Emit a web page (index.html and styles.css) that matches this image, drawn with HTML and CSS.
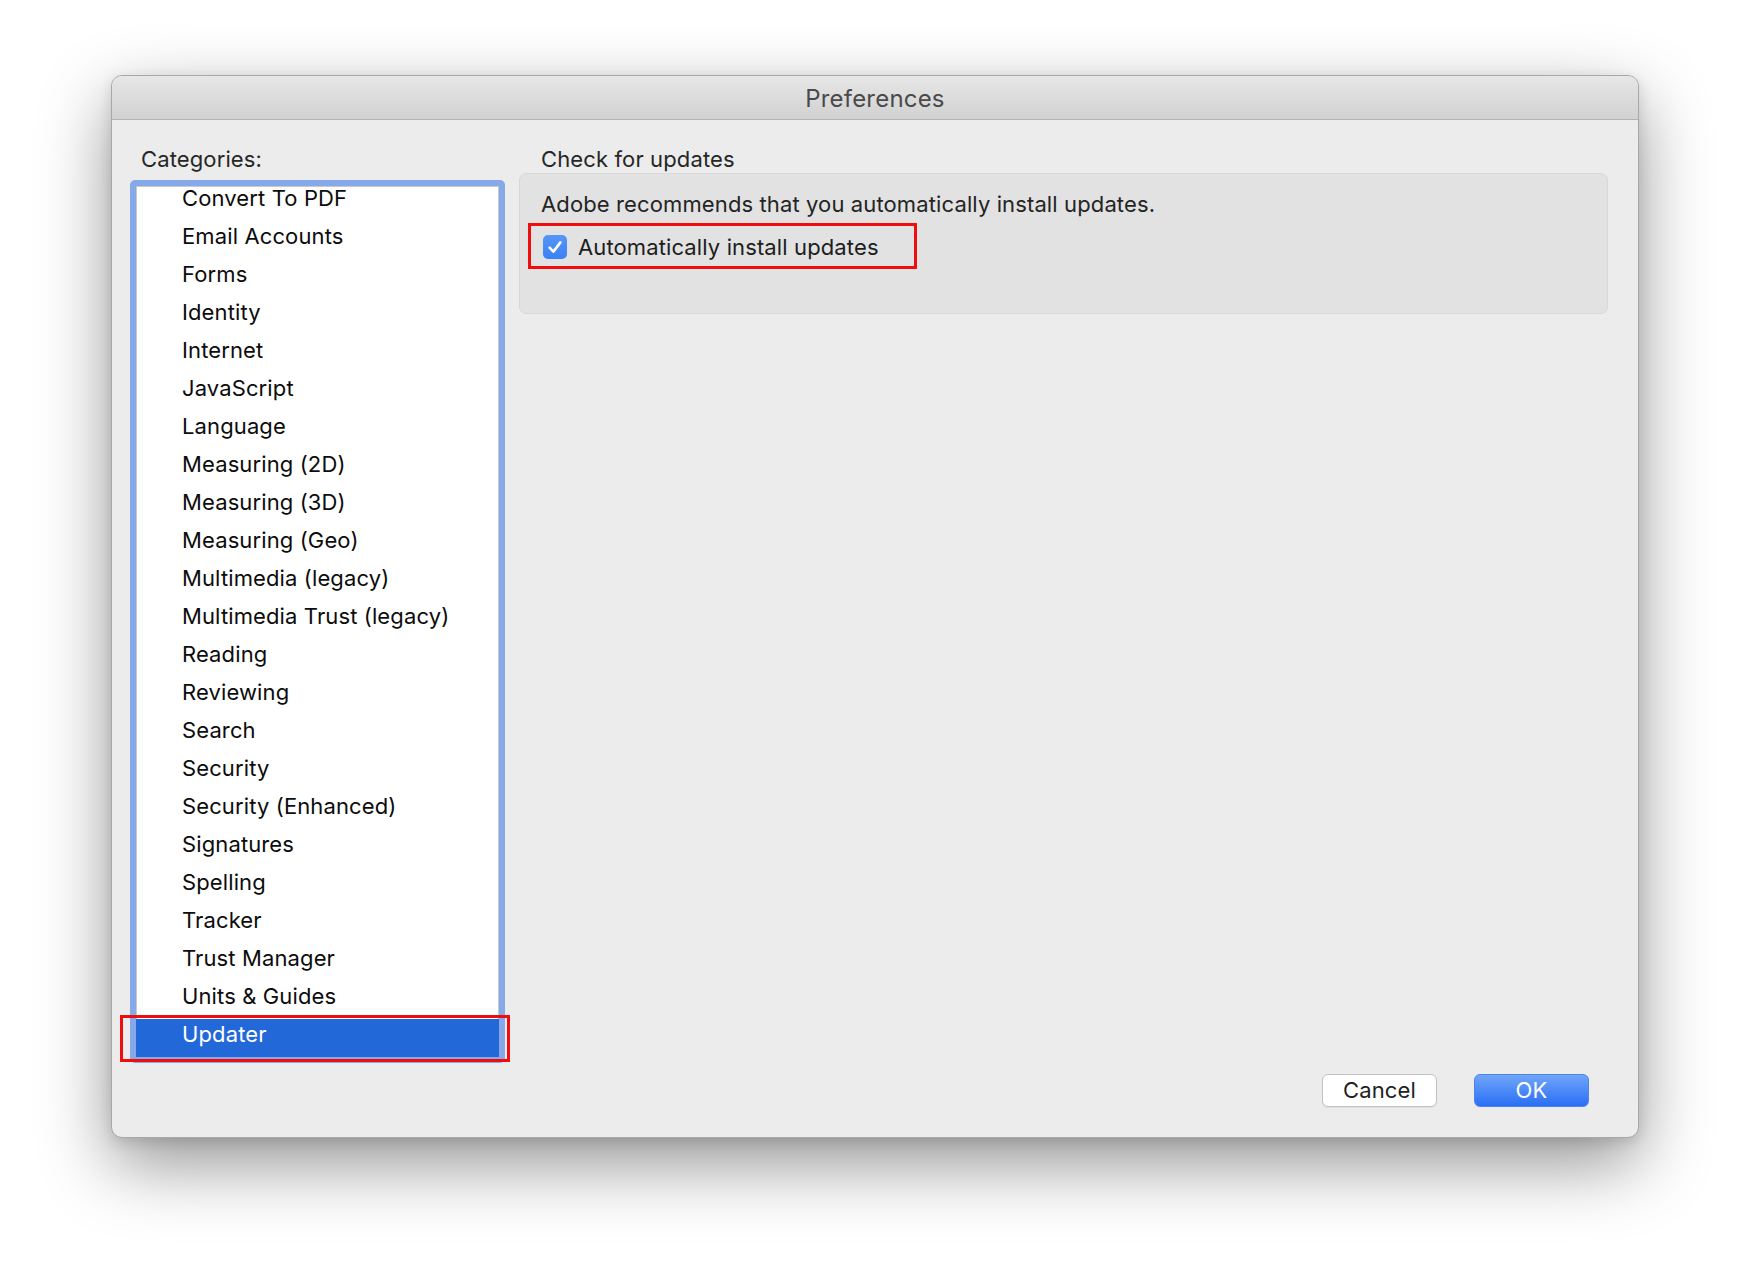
FILE: index.html
```html
<!DOCTYPE html>
<html>
<head>
<meta charset="utf-8">
<title>Preferences</title>
<link rel="stylesheet" href="styles.css">
</head>
<body>
<div class="stage">
  <div class="window">
    <div class="titlebar">Preferences</div>
    <div class="content">
      <div class="main">
        <div class="left">
          <div class="label">Categories:</div>
          <div class="list-wrap">
            <div class="list">
              <ul class="rows">
                <li>Convert To PDF</li>
                <li>Email Accounts</li>
                <li>Forms</li>
                <li>Identity</li>
                <li>Internet</li>
                <li>JavaScript</li>
                <li>Language</li>
                <li>Measuring (2D)</li>
                <li>Measuring (3D)</li>
                <li>Measuring (Geo)</li>
                <li>Multimedia (legacy)</li>
                <li>Multimedia Trust (legacy)</li>
                <li>Reading</li>
                <li>Reviewing</li>
                <li>Search</li>
                <li>Security</li>
                <li>Security (Enhanced)</li>
                <li>Signatures</li>
                <li>Spelling</li>
                <li>Tracker</li>
                <li>Trust Manager</li>
                <li>Units &amp; Guides</li>
                <li class="selected">Updater</li>
              </ul>
            </div>
            <div class="callout callout-list"></div>
          </div>
        </div>
        <div class="right">
          <div class="label">Check for updates</div>
          <div class="group">
            <div class="group-text">Adobe recommends that you automatically install updates.</div>
            <div class="check-row">
              <span class="checkbox">
                <svg width="24" height="24" viewBox="0 0 24 24"><path d="M6.6 12.6 L10.4 16.6 L17.4 7.4" fill="none" stroke="#fff" stroke-width="2.6" stroke-linecap="round" stroke-linejoin="round"/></svg>
              </span>
              <span class="check-label">Automatically install updates</span>
              <div class="callout callout-check"></div>
            </div>
          </div>
        </div>
      </div>
      <div class="buttons">
        <button class="btn btn-cancel">Cancel</button>
        <button class="btn btn-ok">OK</button>
      </div>
    </div>
  </div>
</div>
</body>
</html>
```
FILE: styles.css
```css
* { box-sizing: border-box; }
html, body {
  margin: 0;
  padding: 0;
  background: #ffffff;
}
body {
  width: 1750px;
  height: 1286px;
  overflow: hidden;
  font-family: Inter, "Noto Sans", "Liberation Sans", sans-serif;
  font-size: 22px;
  letter-spacing: 0.12px;
  color: #1f1f1f;
}
.stage {
  padding: 75px 0 0 111px;
}
.window {
  width: 1528px;
  height: 1063px;
  background: #ececec;
  border: 1px solid #a8a8a8;
  border-radius: 11px;
  box-shadow: 0 26px 70px rgba(0, 0, 0, 0.42), 0 4px 14px rgba(0, 0, 0, 0.12);
  display: flex;
  flex-direction: column;
  overflow: hidden;
}
.titlebar {
  height: 44px;
  flex: none;
  background: linear-gradient(#e7e7e7, #d1d1d1);
  border-bottom: 1px solid #b3b3b3;
  text-align: center;
  line-height: 46px;
  font-size: 24px;
  letter-spacing: 0.2px;
  color: #4a4a4a;
}
.content {
  flex: 1;
  display: flex;
  flex-direction: column;
  padding: 26px 49px 30px 18px;
}
.main {
  flex: 1;
  display: flex;
  gap: 14px;
}
.label {
  line-height: 26px;
  height: 26px;
  color: #262626;
}
.left {
  width: 375px;
  flex: none;
}
.left .label {
  padding-left: 11px;
  margin-bottom: 8px;
}
.list-wrap {
  position: relative;
}
.list {
  height: 883px;
  border: 6px solid #86a9e9;
  border-radius: 5px;
  background: #ffffff;
  overflow: hidden;
  box-shadow: inset 0 0 0 1px #c9c9c9;
}
.rows {
  list-style: none;
  margin: -3px 0 0 0;
  padding: 0;
}
.rows li {
  height: 38px;
  line-height: 30px;
  padding-left: 46px;
  color: #0c0c0c;
  white-space: nowrap;
}
.rows li.selected {
  background: #2268d9;
  color: #ffffff;
}
.right {
  flex: 1;
  margin-right: -19px;
}
.right .label {
  padding-left: 22px;
  margin-bottom: 1px;
}
.group {
  height: 141px;
  background: #e2e2e2;
  border: 1px solid #d8d8d8;
  border-radius: 7px;
  padding: 17px 21px 0 21px;
}
.group-text {
  line-height: 26px;
  color: #242424;
}
.check-row {
  position: relative;
  margin-top: 17px;
  display: flex;
  align-items: center;
  height: 26px;
  padding-left: 2px;
  gap: 11px;
}
.checkbox {
  width: 24px;
  height: 24px;
  border-radius: 5px;
  background: linear-gradient(#5596f7, #3b81f4);
  display: inline-flex;
  align-items: center;
  justify-content: center;
}
.checkbox svg { display: block; }
.check-label {
  color: #1d1d1d;
}
.callout {
  position: absolute;
  border: 3px solid #f00d0d;
  pointer-events: none;
}
.callout-check {
  left: -13px;
  top: -11px;
  width: 389px;
  height: 46px;
}
.callout-list {
  left: -10px;
  top: 835px;
  width: 390px;
  height: 47px;
}
.buttons {
  flex: none;
  display: flex;
  justify-content: flex-end;
  gap: 37px;
  margin-top: 0;
}
.btn {
  width: 115px;
  height: 33px;
  border-radius: 6px;
  font-family: Inter, "Noto Sans", "Liberation Sans", sans-serif;
  font-size: 22px;
  letter-spacing: 0.12px;
  padding: 0;
  line-height: 31px;
}
.btn-cancel {
  background: #ffffff;
  border: 1px solid #c2c2c2;
  color: #222222;
  box-shadow: 0 1px 1px rgba(0, 0, 0, 0.06);
}
.btn-ok {
  background: linear-gradient(#70a6f8, #2a6ef5);
  border: 1px solid #4b86f0;
  color: #ffffff;
}
```
